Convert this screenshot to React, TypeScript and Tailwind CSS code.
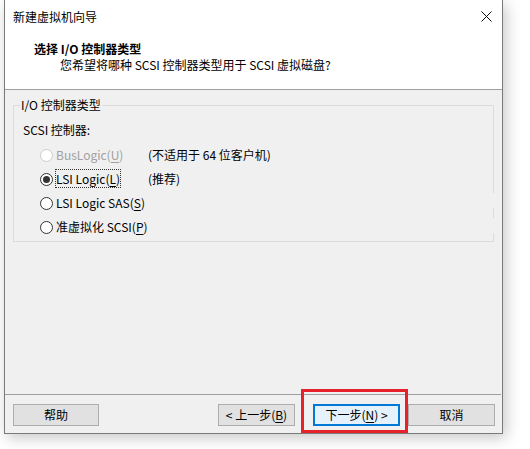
import React from "react";

const font = { fontFamily: '"Noto Sans CJK SC", "Noto Sans", sans-serif' };

type Opt = { label: string; key: string; rest?: string; note?: string; checked?: boolean; disabled?: boolean; focus?: boolean };

const options: Opt[] = [
  { label: "BusLogic(", key: "U", rest: ")", note: "(不适用于 64 位客户机)", disabled: true },
  { label: "LSI Logic(", key: "L", rest: ")", note: "(推荐)", checked: true, focus: true },
  { label: "LSI Logic SAS(", key: "S", rest: ")" },
  { label: "准虚拟化 SCSI(", key: "P", rest: ")" },
];

function Radio({ checked, disabled }: { checked?: boolean; disabled?: boolean }) {
  return (
    <span
      className={`flex h-[13px] w-[13px] shrink-0 items-center justify-center rounded-full border bg-white ${
        disabled ? "border-[#cccccc]" : "border-[#333333]"
      }`}
    >
      {checked && <span className="h-[7px] w-[7px] rounded-full bg-[#333333]" />}
    </span>
  );
}

function Btn({ children, className = "" }: { children: React.ReactNode; className?: string }) {
  return (
    <div
      className={`flex h-[22px] items-center justify-center border border-[#adadad] bg-[#e1e1e1] text-[12px] leading-none text-black ${className}`}
    >
      {children}
    </div>
  );
}

export default function App() {
  return (
    <div className="h-[449px] w-[530px] overflow-hidden bg-white" style={font}>
      <div className="ml-[4px] flex h-[434px] w-[499px] flex-col border border-t-0 border-[#7a7a7a] bg-[#f0f0f0] shadow-[3px_4px_14px_rgba(0,0,0,0.22)]">
        {/* title bar */}
        <div className="flex h-[33px] items-center justify-between bg-white pl-[8px] pr-[9px] text-[12px] text-black">
          <span className="leading-[16px]">新建虚拟机向导</span>
          <svg width="11" height="11" viewBox="0 0 11 11" className="mr-[1px]">
            <path d="M0.5 0.5 L10.5 10.5 M10.5 0.5 L0.5 10.5" stroke="#111" strokeWidth="1" />
          </svg>
        </div>

        {/* header */}
        <div className="h-[57px] border-b border-[#a0a0a0] bg-white pt-[8px] text-[12px] text-black">
          <div className="pl-[29px] font-bold leading-[16px]">选择 I/O 控制器类型</div>
          <div className="pl-[55px] leading-[16px]">您希望将哪种 SCSI 控制器类型用于 SCSI 虚拟磁盘?</div>
        </div>

        {/* body */}
        <div className="flex flex-1 flex-col">
          <div className="relative ml-[8px] mt-[15px] h-[137px] w-[481px] border border-[#dcdcdc] text-[12px] text-black">
            <span className="absolute -top-[9px] left-[6px] bg-[#f0f0f0] px-[1px] leading-[16px]">I/O 控制器类型</span>
            <span className="absolute -right-[1px] top-[87px] h-[15px] w-[1px] bg-[#f0f0f0]" />
            <span className="absolute -right-[1px] top-[112px] h-[15px] w-[1px] bg-[#f0f0f0]" />
            <div className="pl-[9px] pt-[16px] leading-[16px]">SCSI 控制器:</div>
            <div className="mt-[5px] flex flex-col pl-[26px]">
              {options.map((o) => (
                <div key={o.key} className="flex h-[24px] items-center">
                  <Radio checked={o.checked} disabled={o.disabled} />
                  <span className="ml-[3px] w-[92px] shrink-0">
                    <span
                      className={`leading-[16px] ${o.disabled ? "text-[#a0a0a0]" : ""} ${
                        o.focus ? "outline outline-1 outline-dotted outline-[#333]" : ""
                      }`}
                    >
                      {o.label}
                      <span className="underline underline-offset-2">{o.key}</span>
                      {o.rest}
                    </span>
                  </span>
                  {o.note && <span className="leading-[16px]">{o.note}</span>}
                </div>
              ))}
            </div>
          </div>

          {/* footer */}
          <div className="mr-[1px] mt-auto h-[39px] border-t border-[#a0a0a0] pt-[9px]">
            <div className="flex items-start">
              <Btn className="ml-[8px] w-[86px]">帮助</Btn>
              <Btn className="ml-[119px] w-[77px]">
                &lt; 上一步(<span className="underline underline-offset-2">B</span>)
              </Btn>
              <div className="relative ml-[18px]">
                <div className="flex h-[22px] w-[87px] items-center justify-center border-2 border-[#0078d7] bg-[#e5f1fb] text-[12px] leading-none text-black">
                  下一步(<span className="underline underline-offset-2">N</span>) &gt;
                </div>
                <span className="pointer-events-none absolute -left-[12px] -top-[15px] h-[44px] w-[107px] border-[3px] border-[#e5212b]" />
              </div>
              <Btn className="ml-[8px] w-[87px]">取消</Btn>
            </div>
          </div>
        </div>
      </div>
    </div>
  );
}
